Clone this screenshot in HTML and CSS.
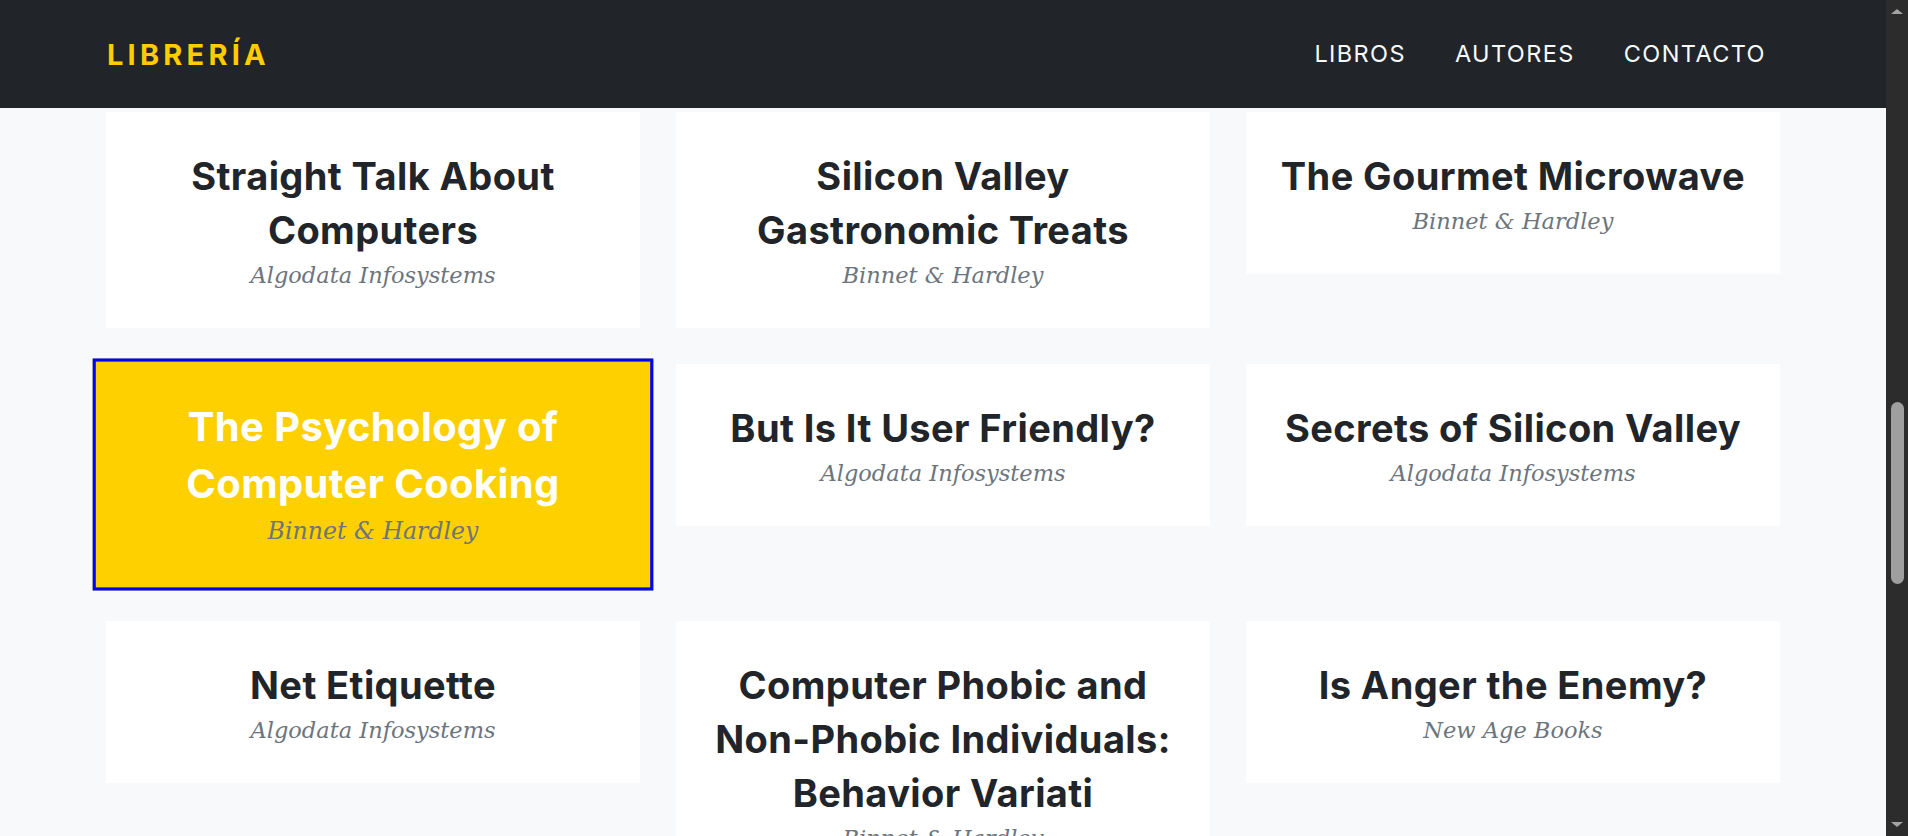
FILE: index.html
```html
<!DOCTYPE html>
<html lang="es">
<head>
<meta charset="utf-8">
<title>Librería</title>
<link rel="stylesheet" href="styles.css">
</head>
<body>
<div class="page">
  <div class="main">
    <header class="navbar">
      <a class="brand" href="#">LIBRERÍA</a>
      <nav class="nav-links">
        <a href="#">LIBROS</a>
        <a href="#">AUTORES</a>
        <a href="#">CONTACTO</a>
      </nav>
    </header>
    <div class="content">
      <div class="grid">
        <div class="card"><h2 class="card-title">Straight Talk About Computers</h2><p class="card-sub">Algodata Infosystems</p></div>
        <div class="card"><h2 class="card-title">Silicon Valley Gastronomic Treats</h2><p class="card-sub">Binnet &amp; Hardley</p></div>
        <div class="card"><h2 class="card-title">The Gourmet Microwave</h2><p class="card-sub">Binnet &amp; Hardley</p></div>
        <div class="card active"><h2 class="card-title">The Psychology of Computer Cooking</h2><p class="card-sub">Binnet &amp; Hardley</p></div>
        <div class="card"><h2 class="card-title">But Is It User Friendly?</h2><p class="card-sub">Algodata Infosystems</p></div>
        <div class="card"><h2 class="card-title">Secrets of Silicon Valley</h2><p class="card-sub">Algodata Infosystems</p></div>
        <div class="card"><h2 class="card-title">Net Etiquette</h2><p class="card-sub">Algodata Infosystems</p></div>
        <div class="card"><h2 class="card-title">Computer Phobic and Non-Phobic Individuals: Behavior Variati</h2><p class="card-sub">Binnet &amp; Hardley</p></div>
        <div class="card"><h2 class="card-title">Is Anger the Enemy?</h2><p class="card-sub">New Age Books</p></div>
      </div>
    </div>
  </div>
  <div class="scrollbar">
    <span class="arrow arrow-up"></span>
    <span class="thumb"></span>
    <span class="arrow arrow-down"></span>
  </div>
</div>
</body>
</html>
```
FILE: styles.css
```css
html, body {
  margin: 0;
  height: 100%;
  overflow: hidden;
}

body {
  background: #f8f9fa;
  font-family: "Inter", "Open Sans", sans-serif;
  color: #212529;
}

.page {
  display: flex;
  height: 100vh;
}

.main {
  flex: 1;
  display: flex;
  flex-direction: column;
  min-width: 0;
}

/* ---------- navbar ---------- */
.navbar {
  height: 108px;
  flex: 0 0 auto;
  background: #212529;
  display: flex;
  align-items: center;
  justify-content: space-between;
  padding: 0 120px 0 107px;
}

.brand {
  color: #ffcc00;
  font-weight: 700;
  font-size: 29px;
  letter-spacing: 4.2px;
  text-decoration: none;
  line-height: 1;
}

.nav-links {
  display: flex;
  gap: 49px;
}

.nav-links a {
  color: #f8f9fa;
  font-size: 23.5px;
  font-weight: 400;
  letter-spacing: 1.4px;
  text-decoration: none;
  line-height: 1;
}

/* ---------- content ---------- */
.content {
  flex: 1;
  overflow: hidden;
}

.grid {
  display: grid;
  grid-template-columns: repeat(3, 1fr);
  column-gap: 36px;
  row-gap: 36px;
  align-items: start;
  padding: 4px 106px 0;
}

.card {
  background: #fff;
  padding: 37px 24px 36px;
  text-align: center;
}

.card-title {
  margin: 0;
  font-size: 38px;
  line-height: 54px;
  font-weight: 700;
  letter-spacing: 0.4px;
  color: #212529;
}

.card-sub {
  margin: 2px 0 0;
  font-family: "DejaVu Serif", serif;
  font-style: italic;
  font-size: 22.5px;
  line-height: 33px;
  color: #6c757d;
}

.card.active {
  background: #ffd000;
  border: 3px solid #0000ff;
  padding: 35px 21px 37px;
  transform: scale(1.05);
}

.card.active .card-title {
  color: #fff;
}

/* ---------- scrollbar ---------- */
.scrollbar {
  width: 22px;
  flex: 0 0 22px;
  background: #2c2c2c;
  display: flex;
  flex-direction: column;
  align-items: center;
}

.arrow {
  width: 0;
  height: 0;
  border-left: 6px solid transparent;
  border-right: 6px solid transparent;
}

.arrow-up {
  margin-top: 9px;
  border-bottom: 5px solid #a3a3a3;
}

.arrow-down {
  margin-top: auto;
  margin-bottom: 9px;
  border-top: 5px solid #a3a3a3;
}

.thumb {
  margin-top: 388px;
  width: 13px;
  height: 182px;
  border-radius: 7px;
  background: #9f9f9f;
}
```
